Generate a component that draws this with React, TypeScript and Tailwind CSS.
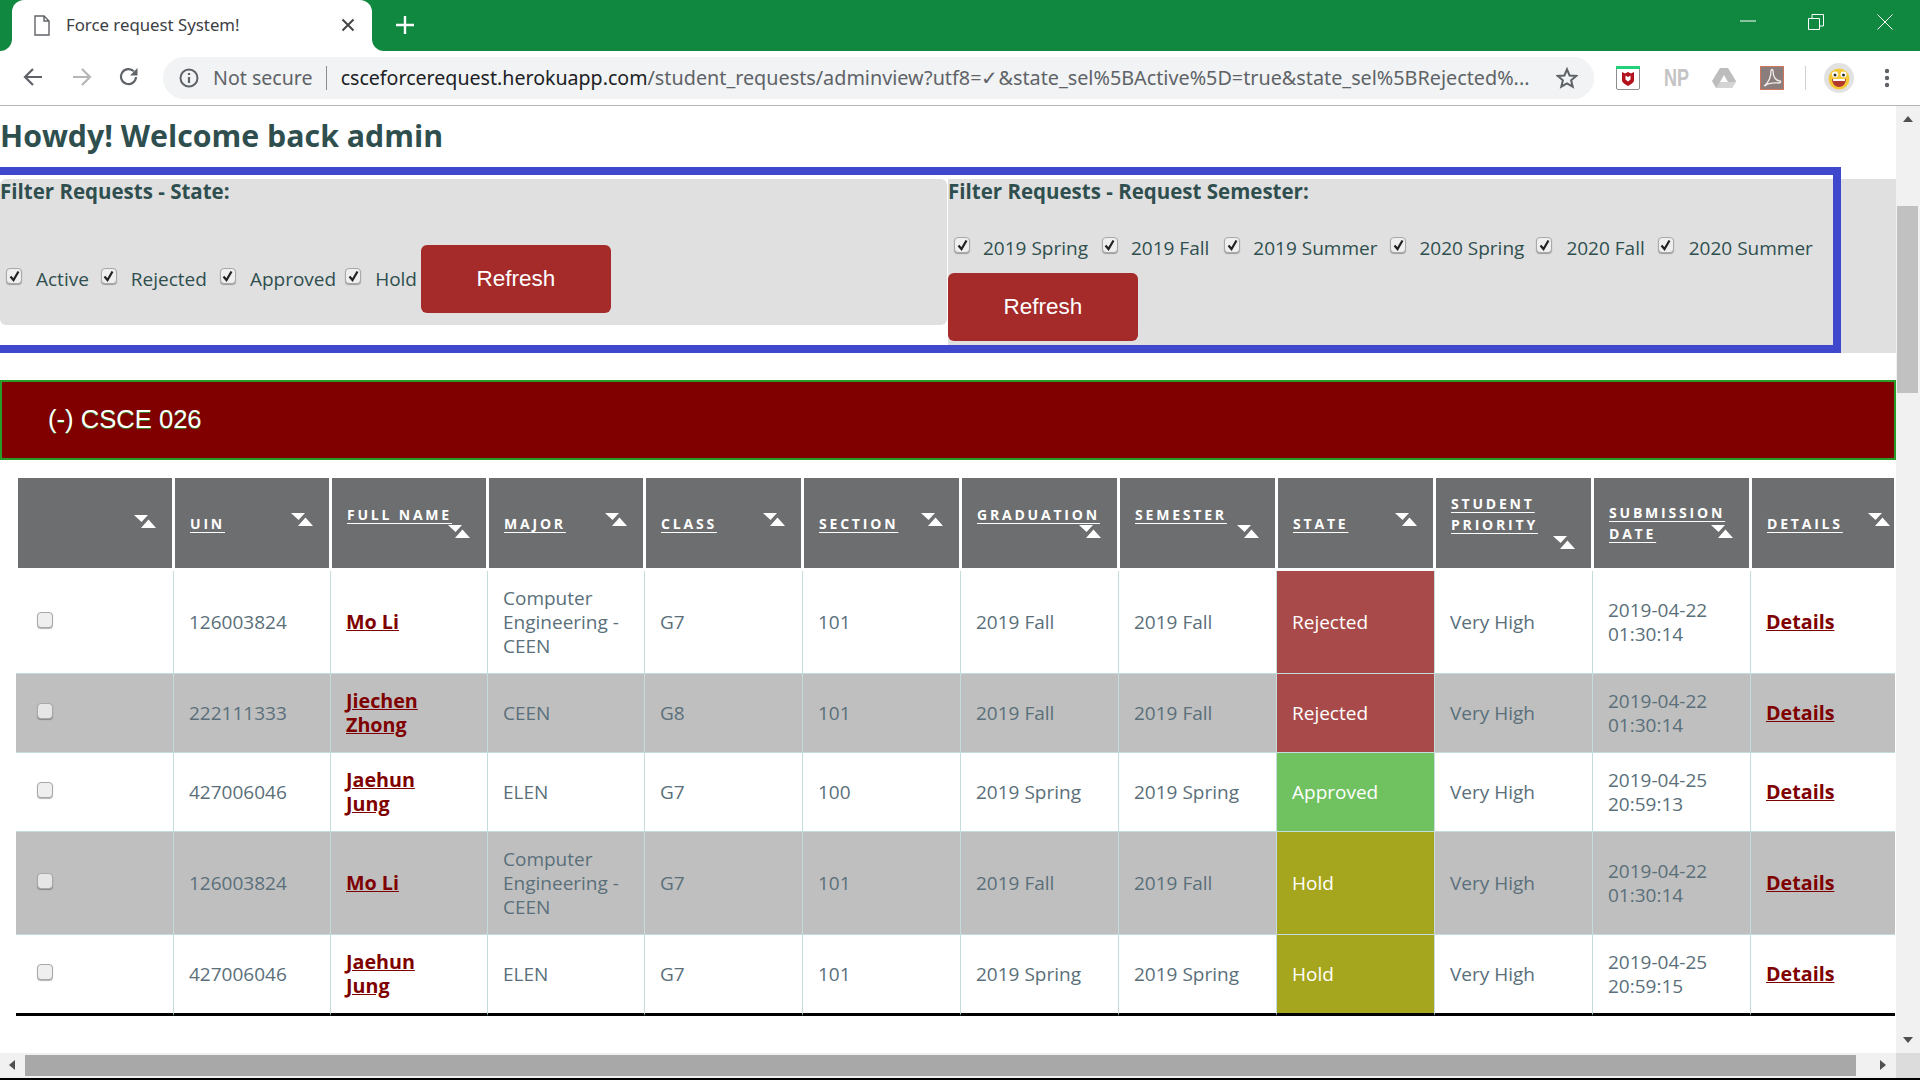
import React from "react";

const ui = { fontFamily: '"Noto Sans", sans-serif' };

function Check({ checked = true, faded = false }: { checked?: boolean; faded?: boolean }) {
  return (
    <span
      className={`inline-flex w-4 h-4 shrink-0 items-center justify-center rounded-[4px] border border-[#a8a8a8] shadow-[0_1px_1px_rgba(0,0,0,0.3)] ${faded ? "bg-[#e6e6e6]" : "bg-[#efefef]"}`}
    >
      {checked && (
        <svg width="11" height="12" viewBox="0 0 11 12">
          <path d="M1.5 6.5 L4.5 10 L9.5 1.5" fill="none" stroke="#222" strokeWidth="2.2" />
        </svg>
      )}
    </span>
  );
}

function FilterOption({ label, cb, gap, top }: { label: string; cb: string; gap: string; top: string }) {
  return (
    <label className={`flex items-center ${cb}`}>
      <span className={top}>
        <Check />
      </span>
      <span className={`${gap} text-[19px] leading-6 text-[#2f4f4f] whitespace-nowrap`}>{label}</span>
    </label>
  );
}

function RefreshButton() {
  return (
    <button
      className="w-[190px] h-[68px] shrink-0 rounded-md bg-[#a52a2a] text-white text-[22.5px]"
      style={{ fontFamily: '"Liberation Sans", Arial, sans-serif' }}
    >
      Refresh
    </button>
  );
}

function SortIcon({ cls }: { cls: string }) {
  return (
    <svg className={`absolute ${cls}`} width="22" height="13" viewBox="0 0 22 13">
      <path d="M0 0 H14 L7.5 7 Z" fill="#fff" />
      <path d="M14.5 4.5 L22 13 H7 Z" fill="#fff" />
    </svg>
  );
}

const headers: { t: React.ReactNode; icon: string; pb?: string }[] = [
  { t: "", icon: "top-[37px] right-[16px]" },
  { t: "UIN", icon: "top-[35px] right-[16px]" },
  { t: "FULL NAME", icon: "top-[47px] right-[16px]", pb: "pb-[18px]" },
  { t: "MAJOR", icon: "top-[35px] right-[16px]" },
  { t: "CLASS", icon: "top-[35px] right-[16px]" },
  { t: "SECTION", icon: "top-[35px] right-[16px]" },
  { t: "GRADUATION", icon: "top-[47px] right-[16px]", pb: "pb-[18px]" },
  { t: "SEMESTER", icon: "top-[47px] right-[16px]", pb: "pb-[18px]" },
  { t: "STATE", icon: "top-[35px] right-[16px]" },
  { t: "STUDENT PRIORITY", icon: "top-[58px] right-[16px]", pb: "pb-[18px]" },
  { t: "SUBMISSION DATE", icon: "top-[47px] right-[16px]" },
  { t: "DETAILS", icon: "top-[35px] right-[4px]" },
];

const widths = ["w-[157px]", "w-[157px]", "w-[157px]", "w-[157px]", "w-[158px]", "w-[158px]", "w-[158px]", "w-[158px]", "w-[158px]", "w-[158px]", "w-[158px]", "w-[145px]"];

const stateColor: Record<string, string> = {
  Rejected: "bg-[#a94a4a]",
  Approved: "bg-[#70c160]",
  Hold: "bg-[#a6a61e]",
};

const rows = [
  ["126003824", "Mo Li", "Computer Engineering - CEEN", "G7", "101", "2019 Fall", "2019 Fall", "Rejected", "Very High", "2019-04-22 01:30:14"],
  ["222111333", "Jiechen\nZhong", "CEEN", "G8", "101", "2019 Fall", "2019 Fall", "Rejected", "Very High", "2019-04-22 01:30:14"],
  ["427006046", "Jaehun\nJung", "ELEN", "G7", "100", "2019 Spring", "2019 Spring", "Approved", "Very High", "2019-04-25 20:59:13"],
  ["126003824", "Mo Li", "Computer Engineering - CEEN", "G7", "101", "2019 Fall", "2019 Fall", "Hold", "Very High", "2019-04-22 01:30:14"],
  ["427006046", "Jaehun\nJung", "ELEN", "G7", "101", "2019 Spring", "2019 Spring", "Hold", "Very High", "2019-04-25 20:59:15"],
];

function BrowserChrome() {
  return (
    <div style={ui}>
      <div className="h-[51px] bg-[#118840] flex relative">
        <div className="ml-[12px] w-[360px] h-[51px] bg-white rounded-t-[12px] relative flex items-center">
          <div className="absolute left-[-12px] bottom-0 w-3 h-3 bg-white">
            <div className="w-3 h-3 bg-[#118840] rounded-br-[12px]" />
          </div>
          <div className="absolute right-[-12px] bottom-0 w-3 h-3 bg-white">
            <div className="w-3 h-3 bg-[#118840] rounded-bl-[12px]" />
          </div>
          <svg className="ml-[22px]" width="16" height="21" viewBox="0 0 16 21">
            <path d="M1 1 H10 L15 6 V20 H1 Z M10 1 V6 H15" fill="none" stroke="#5f6368" strokeWidth="1.4" />
          </svg>
          <span className="ml-[16px] text-[16.8px] text-[#3c4043] whitespace-nowrap -mt-[2px]">Force request System!</span>
          <svg className="absolute left-[329px] top-[18px]" width="14" height="14" viewBox="0 0 14 14">
            <path d="M1.5 1.5 L12.5 12.5 M12.5 1.5 L1.5 12.5" stroke="#444" strokeWidth="2" />
          </svg>
        </div>
        <svg className="ml-[24px] mt-[16px]" width="18" height="18" viewBox="0 0 18 18">
          <path d="M9 0 V18 M0 9 H18" stroke="#fff" strokeWidth="2.4" />
        </svg>
        <svg className="absolute left-[1740px] top-[20px]" width="16" height="2" viewBox="0 0 16 2">
          <path d="M0 1 H16" stroke="#fff" strokeWidth="1" />
        </svg>
        <svg className="absolute left-[1808px] top-[14px]" width="16" height="16" viewBox="0 0 16 16">
          <path d="M0.5 4.5 H11.5 V15.5 H0.5 Z M4 4 V0.5 H15.5 V12 H12" fill="none" stroke="#fff" strokeWidth="1" />
        </svg>
        <svg className="absolute left-[1877px] top-[14px]" width="16" height="16" viewBox="0 0 16 16">
          <path d="M0.5 0.5 L15.5 15.5 M15.5 0.5 L0.5 15.5" stroke="#fff" strokeWidth="1" />
        </svg>
      </div>
      <div className="h-[55px] bg-white border-b border-[#b5b5b5] flex items-start relative">
        <svg className="absolute left-[23px] top-[16px]" width="20" height="20" viewBox="0 0 20 20">
          <path d="M19 10 H2 M10 2 L2 10 L10 18" fill="none" stroke="#5f6368" strokeWidth="2.2" />
        </svg>
        <svg className="absolute left-[72px] top-[16px]" width="20" height="20" viewBox="0 0 20 20">
          <path d="M1 10 H18 M10 2 L18 10 L10 18" fill="none" stroke="#b4b6b8" strokeWidth="2.2" />
        </svg>
        <svg className="absolute left-[119px] top-[16px]" width="20" height="20" viewBox="0 0 20 20">
          <path d="M17 10 A7.5 7.5 0 1 1 14.8 4.3" fill="none" stroke="#5f6368" strokeWidth="2.2" />
          <path d="M18.5 1 V8.5 H11 Z" fill="#5f6368" />
        </svg>
        <div className="ml-[163px] mt-[6px] w-[1431px] h-[42px] rounded-full bg-[#f1f3f4] flex items-center relative overflow-hidden">
          <svg className="ml-[16px]" width="20" height="20" viewBox="0 0 20 20">
            <circle cx="10" cy="10" r="8.5" fill="none" stroke="#5f6368" strokeWidth="2" />
            <path d="M10 9 V15 M10 5 V7" stroke="#5f6368" strokeWidth="2.2" />
          </svg>
          <span className="ml-[14px] text-[19.6px] text-[#5f6368] whitespace-nowrap">Not secure</span>
          <span className="ml-[13px] w-px h-[24px] bg-[#8a8d90]" />
          <span className="ml-[14px] text-[19.6px] text-[#202124] whitespace-nowrap">
            csceforcerequest.herokuapp.com
            <span className="text-[#5f6368] text-[19.8px]">/student_requests/adminview?utf8=✓&amp;state_sel%5BActive%5D=true&amp;state_sel%5BRejected%...</span>
          </span>
          <div className="absolute right-0 top-0 h-[42px] w-[52px] bg-[#f1f3f4] flex items-center pl-[14px]">
            <svg width="22" height="22" viewBox="0 0 24 24">
              <path d="M12 2.5 L14.8 9.2 L22 9.8 L16.5 14.5 L18.2 21.5 L12 17.8 L5.8 21.5 L7.5 14.5 L2 9.8 L9.2 9.2 Z" fill="none" stroke="#5f6368" strokeWidth="2.2" />
            </svg>
          </div>
        </div>
        {/* extensions */}
        <svg className="absolute left-[1616px] top-[15px]" width="24" height="24" viewBox="0 0 24 24">
          <rect x="0.5" y="0.5" width="23" height="23" rx="1.5" fill="#fff" stroke="#8d8d8d" />
          <rect x="0" y="0" width="24" height="3" fill="#25d07b" />
          <path d="M6 6 L9 7.5 L12 6 L15 7.5 L18 6 V14 C18 17 14.5 18.5 12 20 C9.5 18.5 6 17 6 14 Z" fill="#b3121d" />
          <path d="M9.5 9.5 V13.5 L12 15.5 L14.5 13.5 V9.5 L12 11 Z" fill="#fff" />
        </svg>
        <span className="absolute left-[1664px] top-[11px] text-[24px] leading-[32px] font-bold text-[#c4c4c4] scale-x-[0.75] origin-left whitespace-nowrap" style={{ fontFamily: '"Liberation Sans", sans-serif' }}>
          NP
        </span>
        <svg className="absolute left-[1712px] top-[16px]" width="24" height="22" viewBox="0 0 24 22">
          <path d="M8 1 H16 L24 14 L20 21 H4 L0 14 Z" fill="#bdbdbd" />
          <path d="M12 8 L16 15 H8 Z" fill="#fff" />
          <path d="M4 21 L8 15 H24 L20 21 Z" fill="#d4d4d4" />
        </svg>
        <svg className="absolute left-[1760px] top-[15px]" width="24" height="24" viewBox="0 0 24 24">
          <rect x="0.5" y="0.5" width="23" height="23" fill="#8a7d7b" stroke="#d0765f" />
          <path d="M4 20 C8 17 11 11 11 5 C11 3 13 3 13 5 C13 11 16 15 20 15 C21 15 21 17 19 17 C14 17 9 16 5 20" fill="none" stroke="#f0ecec" strokeWidth="1.3" />
        </svg>
        <span className="absolute left-[1805px] top-[15px] w-px h-[24px] bg-[#d0d0d0]" />
        <svg className="absolute left-[1824px] top-[12px]" width="30" height="30" viewBox="0 0 30 30">
          <circle cx="15" cy="15" r="15" fill="#e2e2e2" />
          <circle cx="15" cy="16" r="10.5" fill="#f5c83c" />
          <circle cx="11" cy="11.5" r="3" fill="#fff" />
          <circle cx="19.5" cy="11.5" r="3" fill="#fff" />
          <circle cx="11" cy="12" r="1.5" fill="#333" />
          <circle cx="19.5" cy="12" r="1.5" fill="#333" />
          <path d="M8 16 H22 C22 21 18.5 24 15 24 C11.5 24 8 21 8 16 Z" fill="#b33a2a" />
          <rect x="9" y="16" width="12" height="2" fill="#fff" />
        </svg>
        <svg className="absolute left-[1883px] top-[17px]" width="8" height="20" viewBox="0 0 8 20">
          <circle cx="4" cy="3" r="2.2" fill="#5f6368" />
          <circle cx="4" cy="10" r="2.2" fill="#5f6368" />
          <circle cx="4" cy="17" r="2.2" fill="#5f6368" />
        </svg>
      </div>
    </div>
  );
}

function Filters() {
  const title = "text-[20.5px] leading-6 font-bold text-[#2f4f4f] whitespace-nowrap";
  return (
    <div className="flex items-start">
      <div className="w-[1841px] shrink-0 border-t-8 border-b-8 border-r-8 border-[#3f48cc] pt-1 flex items-start">
        <div className="w-[947px] h-[146px] shrink-0 bg-[#e0e0e0] rounded-md">
          <div className={title}>Filter Requests - State:</div>
          <div className="mt-[42px] flex items-center pl-[6px]">
            <FilterOption label="Active" cb="" gap="ml-[14px]" top="-mt-[6px]" />
            <FilterOption label="Rejected" cb="ml-[12px]" gap="ml-[14px]" top="-mt-[6px]" />
            <FilterOption label="Approved" cb="ml-[13px]" gap="ml-[14px]" top="-mt-[6px]" />
            <FilterOption label="Hold" cb="ml-[9px]" gap="ml-[14px]" top="-mt-[6px]" />
            <div className="ml-[4px]">
              <RefreshButton />
            </div>
          </div>
        </div>
        <div className="ml-[1px] flex-1 h-[166px] bg-[#e0e0e0]">
          <div className={title}>Filter Requests - Request Semester:</div>
          <div className="mt-[33px] h-[24px] flex items-center pl-[6px]">
            <FilterOption label="2019 Spring" cb="" gap="ml-[13px]" top="-mt-[6px]" />
            <FilterOption label="2019 Fall" cb="ml-[14px]" gap="ml-[13px]" top="-mt-[6px]" />
            <FilterOption label="2019 Summer" cb="ml-[15px]" gap="ml-[13px]" top="-mt-[6px]" />
            <FilterOption label="2020 Spring" cb="ml-[13px]" gap="ml-[13px]" top="-mt-[6px]" />
            <FilterOption label="2020 Fall" cb="ml-[12px]" gap="ml-[14px]" top="-mt-[6px]" />
            <FilterOption label="2020 Summer" cb="ml-[13px]" gap="ml-[15px]" top="-mt-[6px]" />
          </div>
          <div className="mt-[13px]">
            <RefreshButton />
          </div>
        </div>
      </div>
      <div className="flex-1 h-[174px] mt-[12px] bg-[#e0e0e0]" />
    </div>
  );
}

function DataTable() {
  return (
    <table className="ml-[16px] mt-[18px] w-[1879px] table-fixed border-separate border-spacing-0">
      <colgroup>
        {widths.map((w, i) => (
          <col key={i} className={w} />
        ))}
      </colgroup>
      <thead>
        <tr>
          {headers.map((h, i) => (
            <th key={i} className="p-0 h-[93px] bg-white align-top text-left">
              <div className={`relative h-[90px] ml-[2px] mr-[1px] bg-[#6d6e70] flex items-center pl-[15px] pr-[14px] ${h.pb ?? ""}`}>
                <span className="text-[14px] leading-[21px] font-bold tracking-[2.8px] text-white underline underline-offset-[3px]">{h.t}</span>
                <SortIcon cls={h.icon} />
              </div>
            </th>
          ))}
        </tr>
      </thead>
      <tbody>
        {rows.map((r, ri) => {
          const odd = ri % 2 === 1;
          const last = ri === rows.length - 1;
          const bottom = last ? "border-b-[3px] border-b-black" : "border-b border-b-[#c5dcdc]";
          const left = "border-l border-l-[#c5dcdc]";
          const bg = odd ? "bg-[#bfbfbf]" : "bg-white";
          const td = `px-[15px] py-[15px] align-middle text-[19px] leading-6 text-[#5a6f7a] ${bottom} ${left} ${bg}`;
          return (
            <tr key={ri}>
              <td className={`pl-[21px] py-[15px] align-middle ${bottom} ${bg}`}>
                <span className="flex -mt-[4px]">
                  <Check checked={false} faded={odd} />
                </span>
              </td>
              <td className={td}>{r[0]}</td>
              <td className={td}>
                <a className="font-bold text-[19.7px] text-[#7f0000] underline whitespace-pre-line">{r[1]}</a>
              </td>
              <td className={td}>{r[2]}</td>
              <td className={td}>{r[3]}</td>
              <td className={td}>{r[4]}</td>
              <td className={td}>{r[5]}</td>
              <td className={td}>{r[6]}</td>
              <td className={`px-[15px] py-[15px] align-middle text-[19px] leading-6 text-white ${bottom} ${left} ${stateColor[r[7]]}`}>{r[7]}</td>
              <td className={td}>{r[8]}</td>
              <td className={td}>{r[9]}</td>
              <td className={td}>
                <a className="font-bold text-[19.7px] text-[#7f0000] underline">Details</a>
              </td>
            </tr>
          );
        })}
      </tbody>
    </table>
  );
}

function Tri({ d, cls }: { d: string; cls: string }) {
  return (
    <svg className={cls} width="12" height="12" viewBox="0 0 12 12">
      <path d={d} fill="#505050" />
    </svg>
  );
}

export default function App() {
  return (
    <div className="w-[1920px] h-[1080px] overflow-hidden flex flex-col bg-white" style={{ fontFamily: '"Open Sans", sans-serif' }}>
      <BrowserChrome />
      <div className="h-[947px] flex">
        <div className="w-[1896px] overflow-hidden">
          <h1 className="h-[61px] pt-[14px] text-[30.3px] leading-[32px] font-bold text-[#2f4f4f] whitespace-nowrap">Howdy! Welcome back admin</h1>
          <Filters />
          <div className="mt-[27px] h-[80px] w-[1896px] border-2 border-[#2a9a2a] bg-[#800000] flex items-center pl-[46px] pb-[2px]">
            <span className="text-[25.6px] text-white [text-shadow:0_1px_0_#3a7a20]" style={{ fontFamily: '"Liberation Sans", Arial, sans-serif' }}>
              (-) CSCE 026
            </span>
          </div>
          <DataTable />
        </div>
        <div className="w-[24px] bg-[#f1f1f1] relative">
          <Tri d="M1 9 L6 3 L11 9 Z" cls="absolute left-[6px] top-[7px]" />
          <Tri d="M1 3 L6 9 L11 3 Z" cls="absolute left-[6px] top-[928px]" />
          <div className="absolute left-[1px] top-[100px] w-[21px] h-[187px] bg-[#c1c1c1]" />
        </div>
      </div>
      <div className="h-[25px] flex bg-[#f1f1f1]">
        <div className="w-[1896px] relative">
          <Tri d="M9 1 L3 6 L9 11 Z" cls="absolute left-[6px] top-[6px]" />
          <div className="absolute left-[25px] top-[2px] w-[1831px] h-[21px] bg-[#a8a8a8]" />
          <Tri d="M3 1 L9 6 L3 11 Z" cls="absolute left-[1877px] top-[6px]" />
        </div>
        <div className="w-[24px] bg-[#dcdcdc]" />
      </div>
      <div className="h-[2px] bg-black" />
    </div>
  );
}
